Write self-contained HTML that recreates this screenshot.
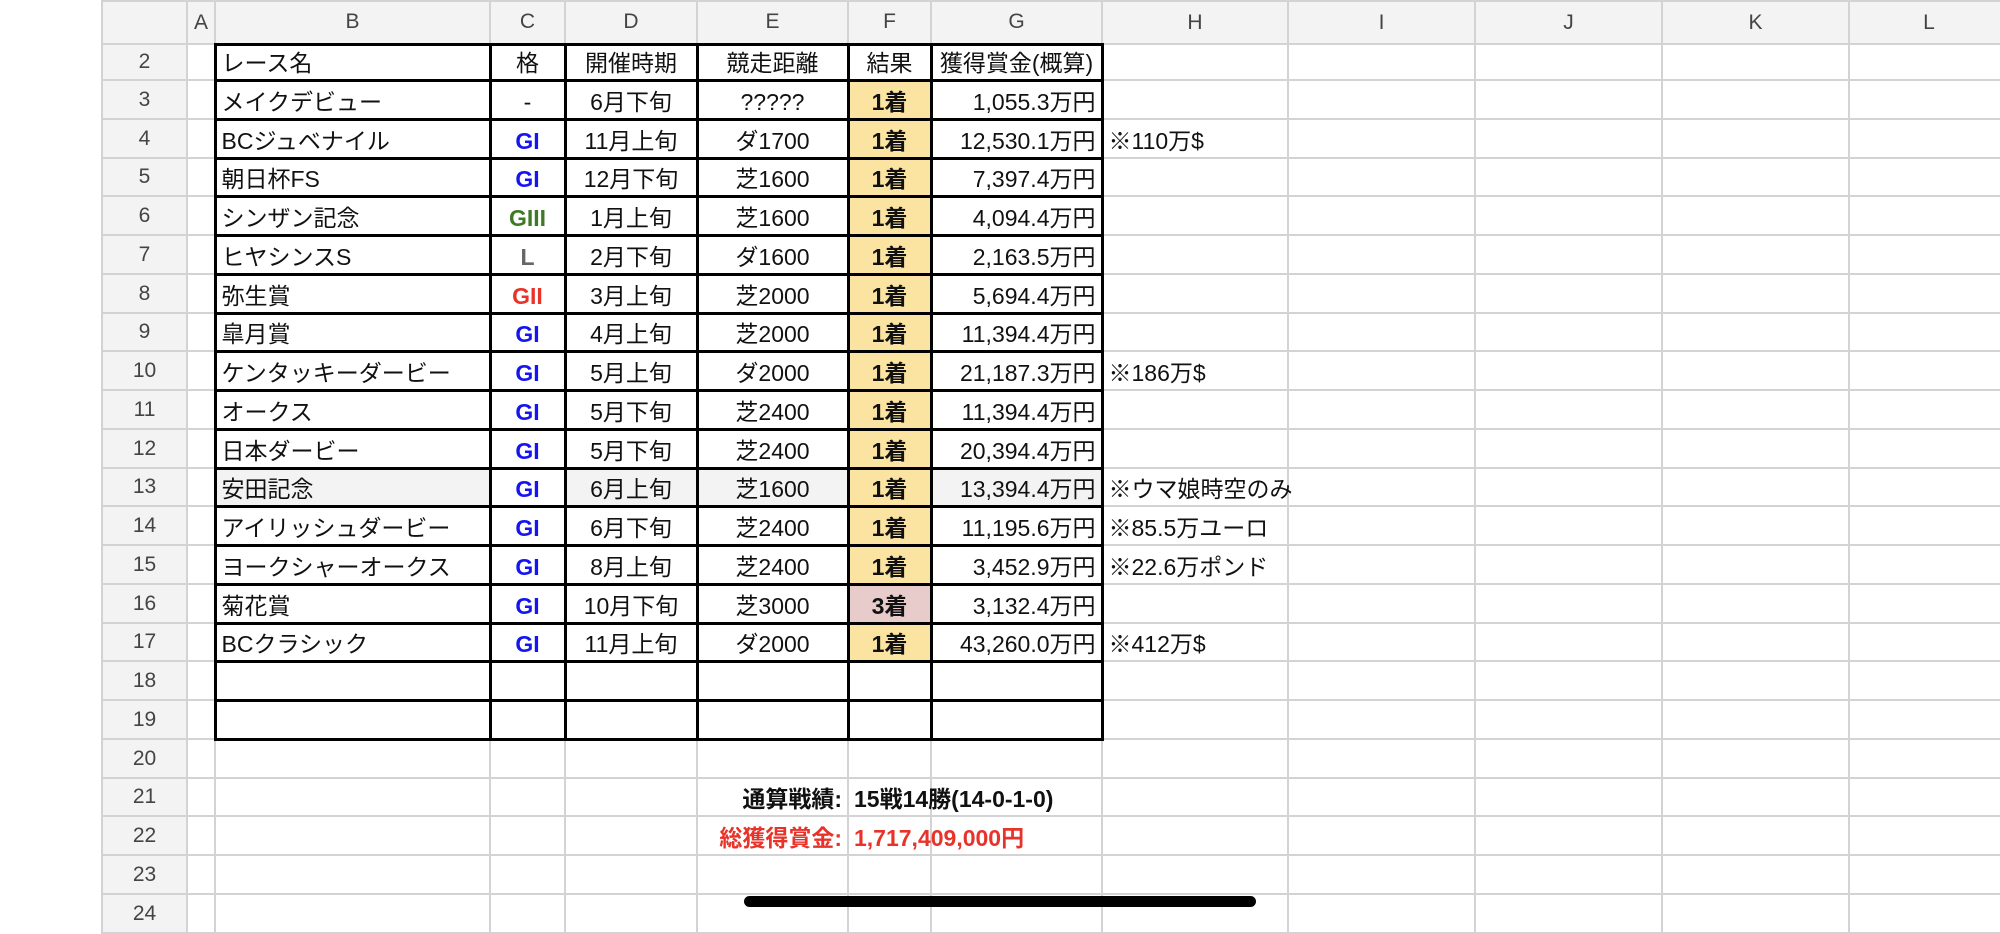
<!DOCTYPE html>
<html><head><meta charset="utf-8"><style>
html,body{margin:0;padding:0;background:#fff;width:2000px;height:924px;overflow:hidden}
table{position:absolute;left:101px;top:0;width:1907px;border-collapse:collapse;table-layout:fixed;font-family:"Liberation Sans","Noto Sans CJK JP",sans-serif;font-size:23px;color:#111}
tr{height:39px}
tr.s{height:38px}
td{border:2px solid #d3d3d3;padding:0 5px 3px 5px;line-height:26px;vertical-align:bottom;white-space:nowrap;overflow:visible}
tr.h{height:43px}
tr.h td{background:#f3f3f3;text-align:center;vertical-align:middle;color:#444;font-size:21px;padding:0}
td.rn{background:#f3f3f3;text-align:center;vertical-align:middle;color:#444;font-size:21px;padding:0}
tr.d td.k{border:3px solid #000}
.c{text-align:center}.r{text-align:right}
.b{font-weight:bold}
.y{background:#fbe4a2}.p{background:#e8cbcb}.g{background:#f3f3f3}
.gi{color:#1515f0;font-weight:bold}.g3{color:#3d7a22;font-weight:bold}.l{color:#666;font-weight:bold}.g2{color:#e8332a;font-weight:bold}
.red{color:#e8332a}
.bar{position:absolute;left:744px;top:896px;width:512px;height:11px;background:#000;border-radius:6px}
</style></head><body>
<table>
<colgroup><col style="width:85px"><col style="width:28px"><col style="width:275px"><col style="width:75px"><col style="width:132px"><col style="width:151px"><col style="width:83px"><col style="width:171px"><col style="width:186px"><col style="width:187px"><col style="width:187px"><col style="width:187px"><col style="width:160px"></colgroup>
<tr class="h"><td></td><td>A</td><td>B</td><td>C</td><td>D</td><td>E</td><td>F</td><td>G</td><td>H</td><td>I</td><td>J</td><td>K</td><td>L</td></tr>
<tr class="d" style="height:36px"><td class="rn">2</td><td></td><td class="k">レース名</td><td class="k c">格</td><td class="k c">開催時期</td><td class="k c">競走距離</td><td class="k c">結果</td><td class="k c" style="padding:0 0 3px 0">獲得賞金(概算)</td><td></td><td></td><td></td><td></td><td></td></tr>
<tr class="d"><td class="rn">3</td><td></td><td class="k">メイクデビュー</td><td class="k c">-</td><td class="k c">6月下旬</td><td class="k c">?????</td><td class="k c b y">1着</td><td class="k r">1,055.3万円</td><td></td><td></td><td></td><td></td><td></td></tr>
<tr class="d"><td class="rn">4</td><td></td><td class="k">BCジュベナイル</td><td class="k c gi">GI</td><td class="k c">11月上旬</td><td class="k c">ダ1700</td><td class="k c b y">1着</td><td class="k r">12,530.1万円</td><td>※110万$</td><td></td><td></td><td></td><td></td></tr>
<tr class="d s"><td class="rn">5</td><td></td><td class="k">朝日杯FS</td><td class="k c gi">GI</td><td class="k c">12月下旬</td><td class="k c">芝1600</td><td class="k c b y">1着</td><td class="k r">7,397.4万円</td><td></td><td></td><td></td><td></td><td></td></tr>
<tr class="d"><td class="rn">6</td><td></td><td class="k">シンザン記念</td><td class="k c g3">GIII</td><td class="k c">1月上旬</td><td class="k c">芝1600</td><td class="k c b y">1着</td><td class="k r">4,094.4万円</td><td></td><td></td><td></td><td></td><td></td></tr>
<tr class="d"><td class="rn">7</td><td></td><td class="k">ヒヤシンスS</td><td class="k c l">L</td><td class="k c">2月下旬</td><td class="k c">ダ1600</td><td class="k c b y">1着</td><td class="k r">2,163.5万円</td><td></td><td></td><td></td><td></td><td></td></tr>
<tr class="d"><td class="rn">8</td><td></td><td class="k">弥生賞</td><td class="k c g2">GII</td><td class="k c">3月上旬</td><td class="k c">芝2000</td><td class="k c b y">1着</td><td class="k r">5,694.4万円</td><td></td><td></td><td></td><td></td><td></td></tr>
<tr class="d s"><td class="rn">9</td><td></td><td class="k">皐月賞</td><td class="k c gi">GI</td><td class="k c">4月上旬</td><td class="k c">芝2000</td><td class="k c b y">1着</td><td class="k r">11,394.4万円</td><td></td><td></td><td></td><td></td><td></td></tr>
<tr class="d"><td class="rn">10</td><td></td><td class="k">ケンタッキーダービー</td><td class="k c gi">GI</td><td class="k c">5月上旬</td><td class="k c">ダ2000</td><td class="k c b y">1着</td><td class="k r">21,187.3万円</td><td>※186万$</td><td></td><td></td><td></td><td></td></tr>
<tr class="d"><td class="rn">11</td><td></td><td class="k">オークス</td><td class="k c gi">GI</td><td class="k c">5月下旬</td><td class="k c">芝2400</td><td class="k c b y">1着</td><td class="k r">11,394.4万円</td><td></td><td></td><td></td><td></td><td></td></tr>
<tr class="d"><td class="rn">12</td><td></td><td class="k">日本ダービー</td><td class="k c gi">GI</td><td class="k c">5月下旬</td><td class="k c">芝2400</td><td class="k c b y">1着</td><td class="k r">20,394.4万円</td><td></td><td></td><td></td><td></td><td></td></tr>
<tr class="d s"><td class="rn">13</td><td></td><td class="k g">安田記念</td><td class="k c gi">GI</td><td class="k c g">6月上旬</td><td class="k c g">芝1600</td><td class="k c b y">1着</td><td class="k r g">13,394.4万円</td><td>※ウマ娘時空のみ</td><td></td><td></td><td></td><td></td></tr>
<tr class="d"><td class="rn">14</td><td></td><td class="k">アイリッシュダービー</td><td class="k c gi">GI</td><td class="k c">6月下旬</td><td class="k c">芝2400</td><td class="k c b y">1着</td><td class="k r">11,195.6万円</td><td>※85.5万ユーロ</td><td></td><td></td><td></td><td></td></tr>
<tr class="d"><td class="rn">15</td><td></td><td class="k">ヨークシャーオークス</td><td class="k c gi">GI</td><td class="k c">8月上旬</td><td class="k c">芝2400</td><td class="k c b y">1着</td><td class="k r">3,452.9万円</td><td>※22.6万ポンド</td><td></td><td></td><td></td><td></td></tr>
<tr class="d"><td class="rn">16</td><td></td><td class="k">菊花賞</td><td class="k c gi">GI</td><td class="k c">10月下旬</td><td class="k c">芝3000</td><td class="k c b p">3着</td><td class="k r">3,132.4万円</td><td></td><td></td><td></td><td></td><td></td></tr>
<tr class="d s"><td class="rn">17</td><td></td><td class="k">BCクラシック</td><td class="k c gi">GI</td><td class="k c">11月上旬</td><td class="k c">ダ2000</td><td class="k c b y">1着</td><td class="k r">43,260.0万円</td><td>※412万$</td><td></td><td></td><td></td><td></td></tr>
<tr class="d"><td class="rn">18</td><td></td><td class="k"></td><td class="k"></td><td class="k"></td><td class="k"></td><td class="k"></td><td class="k"></td><td></td><td></td><td></td><td></td><td></td></tr>
<tr class="d"><td class="rn">19</td><td></td><td class="k"></td><td class="k"></td><td class="k"></td><td class="k"></td><td class="k"></td><td class="k"></td><td></td><td></td><td></td><td></td><td></td></tr>
<tr><td class="rn">20</td><td></td><td></td><td></td><td></td><td></td><td></td><td></td><td></td><td></td><td></td><td></td><td></td></tr>
<tr class="s"><td class="rn">21</td><td></td><td></td><td></td><td></td><td class="r b">通算戦績:</td><td class="b">15戦14勝(14-0-1-0)</td><td></td><td></td><td></td><td></td><td></td><td></td></tr>
<tr><td class="rn">22</td><td></td><td></td><td></td><td></td><td class="r b red">総獲得賞金:</td><td class="b red">1,717,409,000円</td><td></td><td></td><td></td><td></td><td></td><td></td></tr>
<tr><td class="rn">23</td><td></td><td></td><td></td><td></td><td></td><td></td><td></td><td></td><td></td><td></td><td></td><td></td></tr>
<tr><td class="rn">24</td><td></td><td></td><td></td><td></td><td></td><td></td><td></td><td></td><td></td><td></td><td></td><td></td></tr>
</table>
<div class="bar"></div>
</body></html>
